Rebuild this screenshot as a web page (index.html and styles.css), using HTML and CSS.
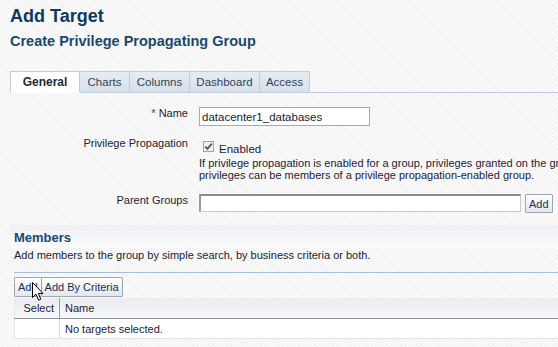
FILE: index.html
```html
<!DOCTYPE html>
<html lang="en">
<head>
    <meta charset="UTF-8">
    <meta name="viewport" content="width=device-width, initial-scale=1.0">
    <title>Add Target</title>
    <link rel="stylesheet" href="styles.css">
</head>
<body>
    <div class="page">
        <h1 class="title">Add Target</h1>
        <h2 class="subtitle">Create Privilege Propagating Group</h2>

        <!-- Tabs -->
        <ul class="tabs">
            <li class="tab active tab-wide">General</li>
            <li class="tab tab-narrow">Charts</li>
            <li class="tab tab-mid">Columns</li>
            <li class="tab tab-wide">Dashboard</li>
            <li class="tab tab-narrow">Access</li>
        </ul>

        <!-- General form -->
        <form class="form">
            <label class="label label-name" for="name"><span class="req">*</span> Name</label>
            <div class="field">
                <input class="text name-input" type="text" id="name" value="datacenter1_databases">
            </div>

            <span class="label label-priv">Privilege Propagation</span>
            <div class="field">
                <label class="check">
                    <svg class="box" width="11" height="11" viewBox="0 0 11 11">
                        <rect x="0.5" y="0.5" width="10" height="10" fill="#f1f1f1" stroke="#a3a3a3"/>
                        <path d="M2.3 5.6 L4.4 7.9 L8.8 2.6" fill="none" stroke="#555" stroke-width="1.8"/>
                    </svg>
                    Enabled
                </label>
                <p class="hint">
                    <span class="hint-line">If privilege propagation is enabled for a group, privileges granted on the group are propagated to its member targets. Only targets that support</span>
                    <span class="hint-line">privileges can be members of a privilege propagation-enabled group.</span>
                </p>
            </div>

            <label class="label label-parent" for="parent">Parent Groups</label>
            <div class="field inline">
                <input class="text parent-input" type="text" id="parent">
                <button type="button" class="btn">Add</button>
            </div>
        </form>

        <!-- Members -->
        <section class="members">
            <h3 class="members-head">Members</h3>
            <p class="members-desc">Add members to the group by simple search, by business criteria or both.</p>

            <div class="toolbar">
                <button type="button" class="btn">Add</button><button type="button" class="btn">Add By Criteria</button>
                <svg class="cursor" width="13" height="20" viewBox="0 0 13 20">
                    <path d="M0.5 0.5 L0.5 15.5 L4 12.2 L6.6 18.2 L8.8 17.2 L6.3 11.4 L11 11.4 Z" fill="#fff" stroke="#000" stroke-width="1"/>
                </svg>
            </div>

            <table class="grid">
                <thead>
                    <tr>
                        <th class="col-select">Select</th>
                        <th class="col-name">Name</th>
                    </tr>
                </thead>
                <tbody>
                    <tr>
                        <td class="col-select"></td>
                        <td class="col-name">No targets selected.</td>
                    </tr>
                </tbody>
            </table>
        </section>
    </div>
</body>
</html>
```

FILE: styles.css
```css
/* Reset */
body, h1, h2, h3, p, ul, li, form, table {
    margin: 0;
    padding: 0;
}

html, body {
    height: 100%;
}

body {
    font-family: "Liberation Sans", Arial, sans-serif;
    font-size: 11px;
    color: #222233;
    overflow: hidden;
    background-color: #f6f6f6;
    background-image: repeating-linear-gradient(45deg, #fafafa 0, #fafafa 2px, #f1f1f1 2px, #f1f1f1 3px);
}

.page {
    padding-left: 10px;
    width: 700px;
}

/* Titles */
.title {
    font-size: 18px;
    line-height: 22px;
    margin-top: 5px;
    color: #0c3a5d;
}

.subtitle {
    font-size: 14.5px;
    line-height: 18px;
    margin-top: 5px;
    color: #1a486b;
}

/* Tabs */
.tabs {
    list-style: none;
    display: flex;
    margin-top: 21px;
    border-bottom: 1px solid #b8c8dc;
}

.tab {
    box-sizing: border-box;
    height: 22px;
    line-height: 20px;
    text-align: center;
    margin-bottom: -1px;
    border: 1px solid #bfcddd;
    border-left: none;
    background: linear-gradient(#e6ecf3, #d7e0eb);
    color: #33435a;
    font-size: 11.5px;
}

.tab-narrow {
    width: 50px;
}

.tab-mid {
    width: 60px;
}

.tab-wide {
    width: 70px;
}

.tab.active {
    border-left: 1px solid #bfcddd;
    border-bottom-color: #ffffff;
    background: #ffffff;
    color: #1c2b40;
    font-size: 12px;
    font-weight: bold;
}

/* Form */
.form {
    display: grid;
    grid-template-columns: 178px 1fr;
    column-gap: 11px;
    margin-top: 14px;
}

.label {
    text-align: right;
    line-height: 12px;
    color: #222233;
}

.label-priv {
    margin-top: 11px;
}

.label-parent {
    margin-top: 13px;
}

.req {
    color: #2a4a7a;
}

.field {
    display: flex;
    flex-direction: column;
}

.field.inline {
    flex-direction: row;
    align-items: flex-start;
    gap: 4px;
    margin-top: 13px;
}

.text {
    box-sizing: border-box;
    height: 19px;
    padding: 0 2px;
    font-family: "Liberation Sans", Arial, sans-serif;
    font-size: 11.5px;
    color: #1c1c30;
    background: #ffffff;
    border: 1px solid #a9a9a9;
    outline: none;
}

.name-input {
    width: 171px;
}

.parent-input {
    width: 322px;
    height: 18px;
    border-color: #c9c9c9;
    border-top: 2px solid #8d8d8d;
    border-left: 2px solid #9a9a9a;
}

.check {
    display: flex;
    align-items: flex-start;
    gap: 5px;
    margin-top: 15px;
    padding-left: 4px;
    line-height: 16px;
    font-size: 11.5px;
}

.hint {
    line-height: 12px;
    white-space: nowrap;
}

.hint-line {
    display: block;
}

/* Buttons */
.btn {
    box-sizing: border-box;
    height: 19px;
    padding: 0 3px;
    font-family: "Liberation Sans", Arial, sans-serif;
    font-size: 11px;
    color: #1a2f55;
    background: linear-gradient(#ffffff, #e3e6eb);
    border: 1px solid #9ea6b1;
    border-radius: 1px;
    cursor: pointer;
}

/* Members section */
.members {
    margin-top: 12px;
}

.members-head {
    height: 21px;
    padding-top: 2px;
    padding-left: 4px;
    line-height: 21px;
    font-size: 13px;
    color: #164a6d;
    background: linear-gradient(#eef0f4, #fbfbfc);
}

.members-desc {
    padding-left: 4px;
    line-height: 14px;
    color: #222233;
}

.toolbar {
    position: relative;
    margin-top: 10px;
    margin-left: 4px;
    padding-top: 4px;
    border-top: 1px solid #a9bedf;
    display: flex;
}

.toolbar .btn {
    height: 20px;
}

.toolbar .btn + .btn {
    margin-left: -1px;
}

/* Mouse pointer over the Add button */
.cursor {
    position: absolute;
    left: 18px;
    top: 9px;
}

.grid {
    margin-top: 1px;
    margin-left: 4px;
    width: 690px;
    border-collapse: collapse;
}

.grid th {
    height: 20px;
    padding: 0;
    font-weight: normal;
    text-align: left;
    color: #222233;
    background: linear-gradient(#ebecf1, #f7f7f9);
    border-bottom: 1px solid #8c8e9a;
}

.grid td {
    height: 19px;
    padding: 0;
    background: #ffffff;
    border-bottom: 1px solid #e2e2e2;
}

.grid .col-select {
    width: 39px;
    padding-right: 5px;
    text-align: right;
    border-left: 1px solid #e6e6e6;
}

.grid th.col-select {
    border-right: 1px solid #9a9ca6;
}

.grid td.col-select {
    border-right: 1px solid #dcdcdc;
}

.grid .col-name {
    padding-left: 5px;
}
```
